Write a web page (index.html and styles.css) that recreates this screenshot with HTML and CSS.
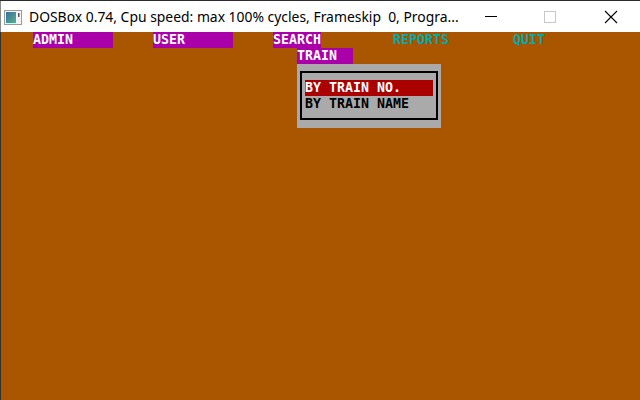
FILE: index.html
```html
<!DOCTYPE html>
<html>
<head>
<meta charset="utf-8">
<link rel="stylesheet" href="styles.css">
</head>
<body>
<div class="window">
  <div class="titlebar">
    <svg class="app-icon" width="18" height="15" viewBox="0 0 18 15">
      <defs>
        <linearGradient id="g" x1="0" y1="0" x2="1" y2="1">
          <stop offset="0" stop-color="#3a6fa0"/>
          <stop offset="1" stop-color="#56b08a"/>
        </linearGradient>
      </defs>
      <rect x="0.5" y="0.5" width="17" height="14" fill="#f4f4f4" stroke="#9a9a9a"/>
      <rect x="2" y="2" width="10" height="11" fill="url(#g)"/>
      <rect x="14" y="3" width="1.5" height="4" fill="#555"/>
    </svg>
    <div class="title">DOSBox 0.74, Cpu speed: max 100% cycles, Frameskip&nbsp; 0, Progra...</div>
    <div class="controls">
      <svg class="ctl" width="46" height="31" viewBox="0 0 46 31"><line x1="9" y1="15.5" x2="21" y2="15.5" stroke="#000" stroke-width="1"/></svg>
      <svg class="ctl" width="46" height="31" viewBox="0 0 46 31"><rect x="9.5" y="10.5" width="11" height="11" fill="none" stroke="#c8c8c8" stroke-width="1"/></svg>
      <svg class="ctl" width="46" height="31" viewBox="0 0 46 31"><path d="M11 10 L23 22 M23 10 L11 22" stroke="#000" stroke-width="1.1" fill="none"/></svg>
    </div>
  </div>
  <div class="screen">
    <div class="row menu">
      <span class="item sel w10">ADMIN</span>
      <span class="item sel w10 gap40">USER</span>
      <span class="item sel w6 gap40">SEARCH</span>
      <span class="item cyan w7 gap72">REPORTS</span>
      <span class="item cyan w4 gap64">QUIT</span>
    </div>
    <div class="dropdown">
      <div class="sub">TRAIN</div>
      <div class="box">
        <div class="frame">
          <div class="opt active">BY TRAIN NO.</div>
          <div class="opt">BY TRAIN NAME</div>
        </div>
      </div>
    </div>
  </div>
</div>
</body>
</html>
```
FILE: styles.css
```css
html, body {
  margin: 0;
  padding: 0;
  width: 640px;
  height: 400px;
  overflow: hidden;
  background: #aa5500;
}
.window {
  width: 640px;
  height: 400px;
  display: flex;
  flex-direction: column;
  border-top: 1px solid #2b2b2b;
  box-sizing: border-box;
}
.titlebar {
  height: 31px;
  background: #ffffff;
  display: flex;
  align-items: center;
  border-left: 1px solid #8a8a8a;
  flex: none;
}
.app-icon {
  margin-left: 3px;
  margin-top: 1px;
  flex: none;
}
.title {
  margin-left: 7px;
  font-family: "Noto Sans", "Open Sans", sans-serif;
  font-size: 13.9px;
  color: #000;
  white-space: nowrap;
  flex: 1;
  margin-top: -1px;
  overflow: hidden;
}
.controls {
  display: flex;
  flex: none;
}
.ctl {
  display: block;
  margin-left: 13px;
}
.ctl:first-child { margin-left: 0; }
.screen {
  flex: 1;
  position: relative;
  background: #aa5500;
  border-left: 1px solid #2e3436;
  font-family: "DejaVu Sans Mono", monospace;
  font-size: 13.29px;
  font-weight: bold;
  color: #ffffff;
}
.row {
  height: 16px;
  line-height: 16px;
  display: flex;
  padding-left: 32px;
}
.item {
  display: block;
  white-space: pre;
  height: 16px;
}
.sel { background: #aa00aa; color: #ffffff; }
.cyan { color: #00aaaa; }
.w10 { width: 80px; }
.w7 { width: 56px; }
.w6 { width: 48px; }
.w4 { width: 32px; }
.gap40 { margin-left: 40px; }
.gap72 { margin-left: 72px; }
.gap64 { margin-left: 64px; }
.dropdown {
  position: absolute;
  left: 296px;
  top: 16px;
  width: 144px;
}
.sub {
  width: 56px;
  height: 16px;
  line-height: 16px;
  background: #aa00aa;
  color: #ffffff;
}
.box {
  background: #aaaaaa;
  height: 64px;
  box-sizing: border-box;
  padding: 7px 3px 8px 3px;
}
.frame {
  border: 2px solid #000;
  height: 49px;
  box-sizing: border-box;
  padding: 7px 3px 0 3px;
}
.opt {
  height: 16px;
  line-height: 16px;
  color: #000;
  white-space: pre;
}
.opt.active {
  background: #aa0000;
  color: #ffffff;
}
```
